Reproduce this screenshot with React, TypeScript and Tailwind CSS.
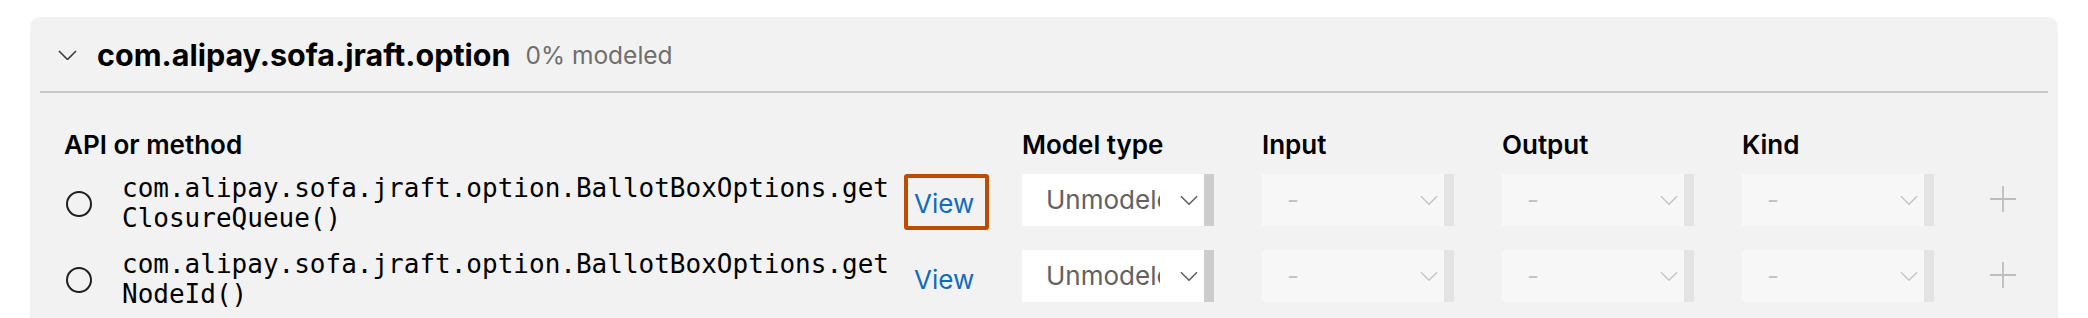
import React from "react";

const rows = [
  { method: "com.alipay.sofa.jraft.option.BallotBoxOptions.getClosureQueue()", focused: true },
  { method: "com.alipay.sofa.jraft.option.BallotBoxOptions.getNodeId()", focused: false },
];

const columns = ["Model type", "Input", "Output", "Kind"];

const ChevronDown = ({ className }: { className: string }) => (
  <svg viewBox="0 0 19 10" fill="none" className={className}>
    <path d="M1 1l8.5 8.5L18 1" stroke="currentColor" strokeWidth="1.6" />
  </svg>
);

const Select = ({ value, disabled }: { value: string; disabled?: boolean }) => (
  <div className={`flex h-[52px] w-[192px] shrink-0 ${disabled ? "bg-[#f7f7f7]" : "bg-white"}`}>
    <div className="flex flex-1 items-center pl-[24px] pr-[6px]">
      <span
        className={`w-[114px] overflow-hidden whitespace-nowrap text-[26px] leading-[30px] ${
          disabled ? "text-[#c4c4c4] pl-[1px]" : "text-[#616161]"
        }`}
      >
        {value}
      </span>
      <ChevronDown
        className={`ml-auto h-[10px] w-[18px] ${disabled ? "text-[#c6c6c6]" : "text-[#5f5f5f]"}`}
      />
    </div>
    <div className={`w-[10px] ${disabled ? "bg-[#e3e3e3]" : "bg-[#cccccc]"}`} />
  </div>
);

export default function App() {
  return (
    <div className="h-[318px] w-[2088px] overflow-hidden bg-white pl-[30px] pt-[17px] font-['Inter',sans-serif]">
      <div className="h-[320px] w-[2028px] rounded-[10px] bg-[#f2f2f2]">
        {/* Library header */}
        <div className="flex h-[74px] items-center pl-[28px] pt-[2px]">
          <ChevronDown className="h-[10px] w-[19px] text-[#3b3b3b]" />
          <span className="ml-[20px] text-[30.5px] font-bold text-black">com.alipay.sofa.jraft.option</span>
          <span className="ml-[15px] text-[24.5px] text-[#6e6e6e]">0% modeled</span>
        </div>
        <div className="mx-[10px] h-[2px] bg-[#c8c8c8]" />

        {/* Table */}
        <div className="pl-[34px] pt-[36px]">
          <div className="flex h-[30px] items-center text-[26px] font-semibold text-black">
            <div className="w-[958px]">API or method</div>
            {columns.map((c) => (
              <div key={c} className="w-[240px]">
                {c}
              </div>
            ))}
          </div>

          <div className="mt-[14px] flex flex-col gap-[16px]">
            {rows.map((row) => (
              <div key={row.method} className="flex h-[60px] items-start">
                <div className="ml-[2px] mt-[18px] h-[26px] w-[26px] shrink-0 rounded-full border-2 border-[#1f1f1f]" />
                <div className="ml-[30px] w-[775px] shrink-0 break-all font-['DejaVu_Sans_Mono',monospace] text-[26px] leading-[30px] text-black">
                  {row.method}
                </div>
                <div
                  className={`ml-[7px] mt-[1px] flex h-[56px] w-[85px] shrink-0 items-center rounded-[3px] border-4 pl-[6px] pt-[2px] ${
                    row.focused ? "border-[#bc4c00]" : "border-transparent"
                  }`}
                >
                  <span className="text-[26px] text-[#0f6cbd]">View</span>
                </div>
                <div className="ml-[33px] mt-[1px] flex gap-[48px]">
                  <Select value="Unmodeled" />
                  <Select value="-" disabled />
                  <Select value="-" disabled />
                  <Select value="-" disabled />
                </div>
                <div className="ml-[56px] mt-[13px] h-[26px] w-[26px] shrink-0">
                  <svg viewBox="0 0 26 26" className="h-[26px] w-[26px]">
                    <path d="M13 0v26M0 13h26" stroke="#bdbdbd" strokeWidth="1.8" fill="none" />
                  </svg>
                </div>
              </div>
            ))}
          </div>
        </div>
      </div>
    </div>
  );
}
